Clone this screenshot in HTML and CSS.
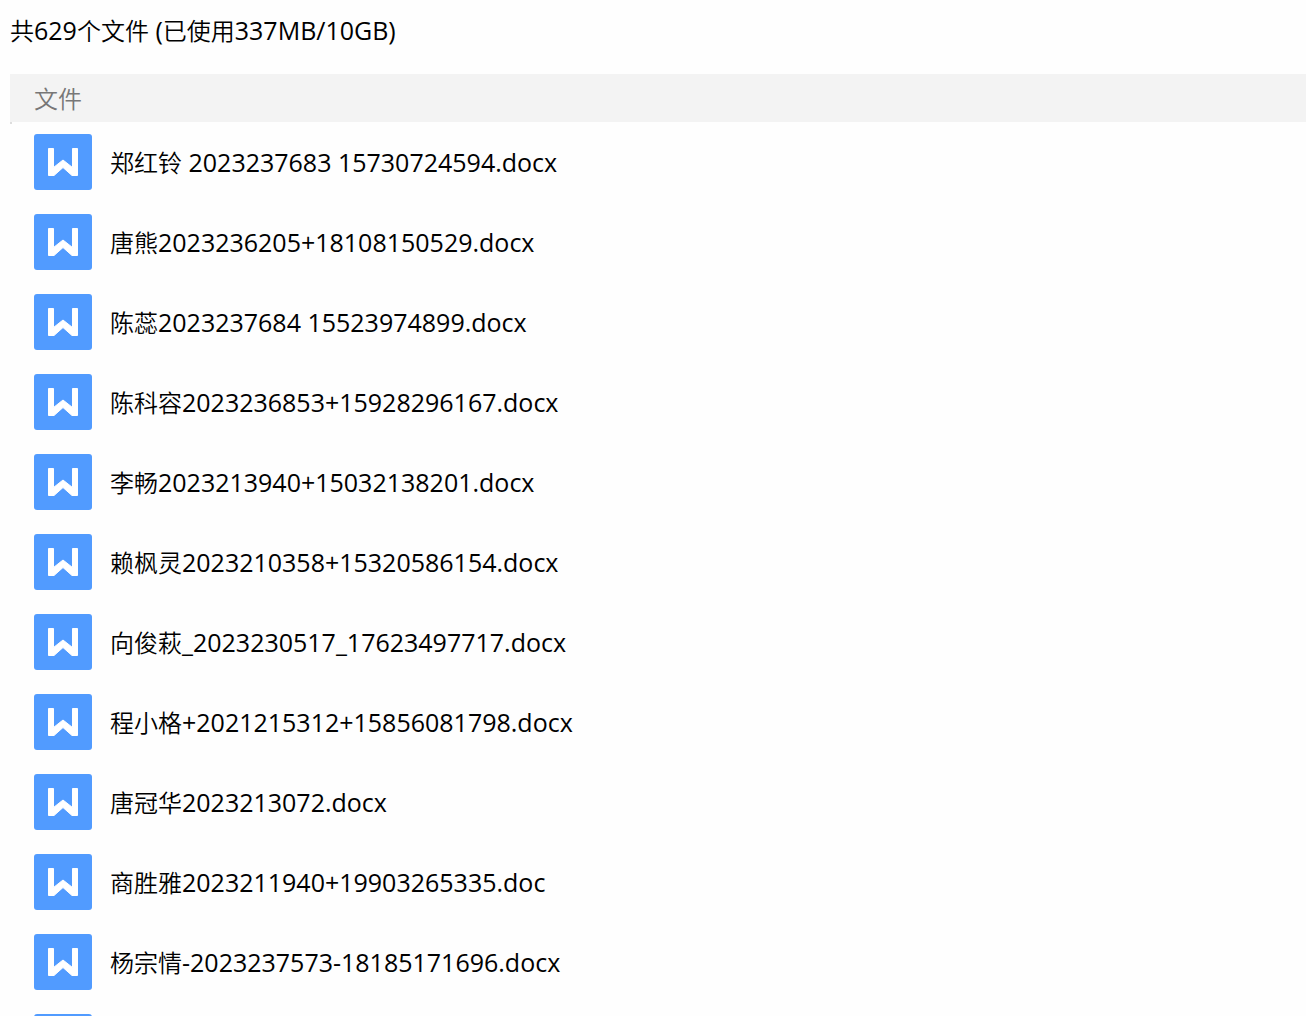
FILE: index.html
```
<!DOCTYPE html>
<html lang="zh-CN">
<head>
  <meta charset="UTF-8" />
  <meta name="viewport" content="width=device-width, initial-scale=1.0">
  <title>文件</title>
  <link rel="stylesheet" href="styles.css">
</head>
<body>

  <!-- Shared doc icon -->
  <svg class="sprite" aria-hidden="true">
    <symbol id="doc" viewBox="0 0 58 56">
      <rect width="58" height="56" rx="3" fill="#519bff" />
      <path d="M14.500 14.500h5v19l9.500-7.500 9.500 7.500v-19h5v27h-5.500L29 33.500l-9 8h-5.500z" fill="#fff" stroke="#fff" stroke-linejoin="round" />
    </symbol>
  </svg>

  <main class="page">
    <p class="summary">共<span class="latin">629</span>个文件<span class="latin"> (</span>已使用<span class="latin">337MB/10GB)</span></p>

    <table class="files">
      <thead>
        <tr><th scope="col">文件</th></tr>
      </thead>
      <tbody>
        <tr><td><div class="file"><svg class="icon"><use href="#doc" /></svg><div class="name">郑红铃<span class="latin"> 2023237683 15730724594.docx</span></div></div></td></tr>
        <tr><td><div class="file"><svg class="icon"><use href="#doc" /></svg><div class="name">唐熊<span class="latin">2023236205+18108150529.docx</span></div></div></td></tr>
        <tr><td><div class="file"><svg class="icon"><use href="#doc" /></svg><div class="name">陈蕊<span class="latin">2023237684 15523974899.docx</span></div></div></td></tr>
        <tr><td><div class="file"><svg class="icon"><use href="#doc" /></svg><div class="name">陈科容<span class="latin">2023236853+15928296167.docx</span></div></div></td></tr>
        <tr><td><div class="file"><svg class="icon"><use href="#doc" /></svg><div class="name">李畅<span class="latin">2023213940+15032138201.docx</span></div></div></td></tr>
        <tr><td><div class="file"><svg class="icon"><use href="#doc" /></svg><div class="name">赖枫灵<span class="latin">2023210358+15320586154.docx</span></div></div></td></tr>
        <tr><td><div class="file"><svg class="icon"><use href="#doc" /></svg><div class="name">向俊萩<span class="latin">_2023230517_17623497717.docx</span></div></div></td></tr>
        <tr><td><div class="file"><svg class="icon"><use href="#doc" /></svg><div class="name">程小格<span class="latin">+2021215312+15856081798.docx</span></div></div></td></tr>
        <tr><td><div class="file"><svg class="icon"><use href="#doc" /></svg><div class="name">唐冠华<span class="latin">2023213072.docx</span></div></div></td></tr>
        <tr><td><div class="file"><svg class="icon"><use href="#doc" /></svg><div class="name">商胜雅<span class="latin">2023211940+19903265335.doc</span></div></div></td></tr>
        <tr><td><div class="file"><svg class="icon"><use href="#doc" /></svg><div class="name">杨宗情<span class="latin">-2023237573-18185171696.docx</span></div></div></td></tr>
        <tr><td><div class="file"><svg class="icon"><use href="#doc" /></svg></div></td></tr>
      </tbody>
    </table>
  </main>

</body>
</html>
```
FILE: styles.css
```
body {
  margin: 0;
  background: #fefefe;
  color: #000;
  font-family: "Noto Sans", "Noto Sans CJK SC", sans-serif;
  font-size: 24px;
  font-weight: 350;
  line-height: 32px;
}

.sprite {
  display: none;
}

.page {
  height: 100vh;
  padding-left: 10px;
  box-sizing: border-box;
  overflow: hidden;
}

.summary {
  margin: 0;
  padding: 15px 0 27px;
}

/* digits and latin letters run a touch larger than the hanzi */
.latin {
  font-family: "Open Sans", "Noto Sans", sans-serif;
  font-size: 25px;
  font-weight: 370;
  line-height: 1;
}

.files {
  width: 100%;
  border-collapse: collapse;
}

.files th {
  position: relative;
  height: 46px;
  padding: 2px 24px 0;
  background: #f3f3f3;
  color: #777;
  font-weight: 350;
  text-align: left;
}

/* stub of the list border under the header */
.files th::after {
  content: "";
  position: absolute;
  top: 100%;
  left: 0;
  width: 2px;
  height: 2px;
  background: #ddd;
}

.files td {
  padding: 0;
}

.file {
  display: flex;
  align-items: center;
  gap: 18px;
  padding: 12px 24px;
}

.icon {
  flex: none;
  width: 58px;
  height: 56px;
}

.name {
  padding-top: 2px;
}
```
